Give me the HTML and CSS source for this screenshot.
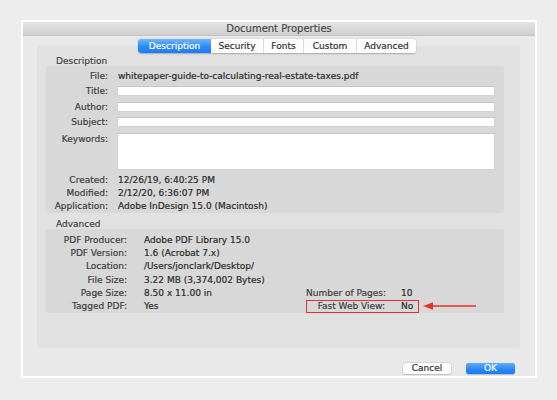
FILE: index.html
```html
<!DOCTYPE html>
<html>
<head>
<meta charset="utf-8">
<title>Document Properties</title>
<link rel="stylesheet" href="styles.css">
</head>
<body>
<div class="dialog">
  <div class="titlebar">Document Properties</div>
  <div class="tabs">
    <div class="tab active t1">Description</div>
    <div class="tab t2">Security</div>
    <div class="tab t3">Fonts</div>
    <div class="tab t4">Custom</div>
    <div class="tab t5">Advanced</div>
  </div>
  <div class="panel">
    <div class="heading">Description</div>
    <div class="section desc">
      <div class="row r-file"><span class="label">File:</span><span class="value">whitepaper-guide-to-calculating-real-estate-taxes.pdf</span></div>
      <div class="row r-field r-title"><span class="label">Title:</span><span class="field"></span></div>
      <div class="row r-field r-author"><span class="label">Author:</span><span class="field"></span></div>
      <div class="row r-field r-subject"><span class="label">Subject:</span><span class="field"></span></div>
      <div class="row r-keywords"><span class="label">Keywords:</span><span class="field big"></span></div>
      <div class="row r-info r-created"><span class="label">Created:</span><span class="value">12/26/19, 6:40:25 PM</span></div>
      <div class="row r-info"><span class="label">Modified:</span><span class="value">2/12/20, 6:36:07 PM</span></div>
      <div class="row r-info"><span class="label">Application:</span><span class="value">Adobe InDesign 15.0 (Macintosh)</span></div>
    </div>
    <div class="heading adv-heading">Advanced</div>
    <div class="section adv">
      <div class="arow"><span class="alabel">PDF Producer:</span><span class="aval">Adobe PDF Library 15.0</span></div>
      <div class="arow"><span class="alabel">PDF Version:</span><span class="aval">1.6 (Acrobat 7.x)</span></div>
      <div class="arow"><span class="alabel">Location:</span><span class="aval">/Users/jonclark/Desktop/</span></div>
      <div class="arow"><span class="alabel">File Size:</span><span class="aval">3.22 MB (3,374,002 Bytes)</span></div>
      <div class="arow"><span class="alabel">Page Size:</span><span class="aval">8.50 x 11.00 in</span>
        <span class="pair"><span class="plabel">Number of Pages:</span><span class="pval">10</span></span></div>
      <div class="arow"><span class="alabel">Tagged PDF:</span><span class="aval">Yes</span>
        <span class="pair flag"><span class="plabel">Fast Web View:</span><span class="pval">No</span></span></div>
    </div>
  </div>
  <div class="buttons">
    <div class="btn cancel">Cancel</div>
    <div class="btn ok">OK</div>
  </div>
</div>
<svg class="arrow" width="60" height="12" viewBox="0 0 60 12">
  <line x1="56" y1="6" x2="11" y2="6" stroke="#e8312a" stroke-width="1.6"/>
  <polygon points="3,6 13,2.3 13,9.7" fill="#e8312a"/>
</svg>
</body>
</html>
```

FILE: styles.css
```css
html, body {
  margin: 0;
  padding: 0;
}
body {
  background: #ededed;
  width: 557px;
  height: 400px;
  overflow: hidden;
  font-family: "DejaVu Sans", Verdana, sans-serif;
  font-size: 9px;
  color: #333;
  position: relative;
  -webkit-text-stroke: 0.2px;
}
.dialog {
  margin: 20px 0 0 21px;
  width: 516px;
  height: 358px;
  box-sizing: border-box;
  border: 2px solid #ffffff;
  background: #e9e9e9;
}
.titlebar {
  height: 14px;
  line-height: 14px;
  text-align: center;
  font-size: 10px;
  color: #4a4a4a;
  background: linear-gradient(#e4e4e4, #cfcfcf);
  border-bottom: 1px solid #c4c4c4;
  box-sizing: border-box;
}
.tabs {
  display: flex;
  margin: 3px 0 0 115px;
  height: 14px;
  width: 278px;
  position: relative;
  z-index: 1;
  border-radius: 3px;
  box-shadow: 0 0.5px 1.5px rgba(0,0,0,0.25);
  background: #fff;
}
.tab {
  height: 14px;
  line-height: 14px;
  text-align: center;
  color: #333;
  background: #fdfdfd;
  border-left: 1px solid #dcdcdc;
  box-sizing: border-box;
}
.tab.active {
  color: #fff;
  background: linear-gradient(#6db5fb, #2f8af6 55%, #1b7cf4);
  border-left: none;
  border-radius: 3px 0 0 3px;
}
.tab.t2 { border-left: none; }
.tab.t5 { border-radius: 0 3px 3px 0; }
.t1 { width: 73px; }
.t2 { width: 52px; }
.t3 { width: 40px; }
.t4 { width: 53px; }
.t5 { width: 60px; }
.panel {
  margin: -7px 0 0 14px;
  width: 483px;
  height: 302px;
  box-sizing: border-box;
  padding: 11px 16px 0 9px;
  background: #e1e1e1;
  border-radius: 3px;
}
.heading {
  height: 9px;
  line-height: 9px;
  margin-left: 10px;
  color: #444;
}
.adv-heading {
  margin-top: 7px;
}
.section {
  background: #d8d8d8;
  border-radius: 3px;
  box-sizing: border-box;
}
.desc {
  height: 147px;
  padding-top: 4px;
}
.row {
  display: flex;
  align-items: center;
}
.label {
  width: 62px;
  text-align: right;
  color: #3d3d3d;
  flex: none;
  white-space: nowrap;
}
.value {
  margin-left: 10px;
  color: #2b2b2b;
  white-space: nowrap;
}
.field {
  margin-left: 9px;
  width: 378px;
  height: 10px;
  background: #fff;
  border: 1px solid #d2d2d2;
  border-top-color: #c6c6c6;
  box-sizing: border-box;
}
.field.big {
  height: 37px;
}
.r-file { height: 12px; }
.r-field { height: 10px; }
.r-title { margin-top: 4px; }
.r-author { margin-top: 6px; }
.r-subject { margin-top: 5px; }
.r-keywords {
  margin-top: 6px;
  height: 37px;
  align-items: flex-start;
}
.r-keywords .label {
  line-height: 10px;
  margin-top: 1px;
}
.r-info { height: 13.5px; }
.r-created { margin-top: 3px; height: 13px; }
.adv {
  height: 84px;
  padding-top: 4px;
}
.arow {
  display: flex;
  align-items: center;
  height: 13.33px;
}
.alabel {
  width: 81px;
  flex: none;
  text-align: right;
  color: #3d3d3d;
  white-space: nowrap;
}
.aval {
  margin-left: 17px;
  width: 162px;
  flex: none;
  color: #2b2b2b;
  white-space: nowrap;
}
.pair {
  display: flex;
  align-items: center;
  width: 113px;
  height: 13.33px;
  flex: none;
}
.plabel {
  width: 79px;
  flex: none;
  text-align: right;
  color: #3d3d3d;
  white-space: nowrap;
}
.pval {
  margin-left: 16px;
  color: #2b2b2b;
}
.flag {
  outline: 1.6px solid #e8312a;
  outline-offset: -1.6px;
}
.buttons {
  display: flex;
  justify-content: flex-end;
  gap: 15px;
  margin-top: 15px;
  padding-right: 20px;
}
.btn {
  height: 11px;
  line-height: 11px;
  text-align: center;
  border-radius: 2.5px;
  font-size: 9px;
}
.cancel {
  width: 48px;
  background: #fff;
  color: #333;
  box-shadow: 0 0 0 0.5px #c4c4c4, 0 0.5px 1px rgba(0,0,0,0.2);
}
.ok {
  width: 49px;
  color: #fff;
  background: linear-gradient(#63acfb, #2a86f5 60%, #1c7cf3);
  box-shadow: 0 0.5px 1px rgba(0,0,0,0.2);
}
.arrow {
  position: absolute;
  left: 420px;
  top: 300px;
}
```
